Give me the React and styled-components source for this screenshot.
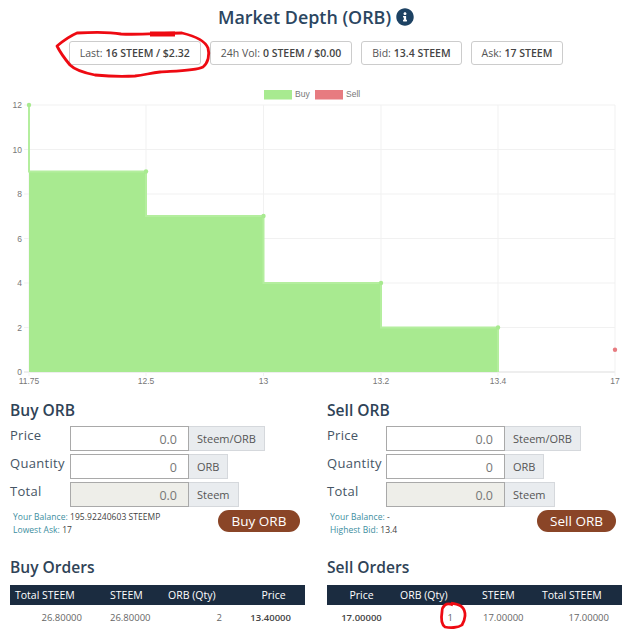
import React from 'react'
import styled, { createGlobalStyle } from 'styled-components'
import { FaInfoCircle } from 'react-icons/fa'

const GlobalStyle = createGlobalStyle`
    html, body {
        margin: 0;
        padding: 0;
        background: #fff;
        font-family: "Open Sans", "Liberation Sans", sans-serif;
    }
`

const Page = styled.div`
    position: relative;
    width: 635px;
    height: 632px;
    overflow: hidden;
`

const Title = styled.h1`
    display: flex;
    justify-content: center;
    align-items: center;
    gap: 5px;
    height: 34px;
    margin: 0;
    padding-right: 3px;
    font-size: 17.9px;
    font-weight: 600;
    color: #2b4661;
    svg {
        color: #1d4263;
    }
`

const Stats = styled.div`
    display: flex;
    justify-content: center;
    gap: 9px;
    margin-top: 7px;
    padding-right: 3px;
`

const Stat = styled.div`
    display: flex;
    align-items: center;
    gap: 3px;
    height: 24px;
    padding: 0 10px;
    box-sizing: border-box;
    border: 1px solid #ccc;
    border-radius: 3px;
    font-size: 10.5px;
    color: #555;
    b {
        font-weight: 600;
        color: #444;
    }
`

const Chart = styled.svg`
    display: block;
    margin-top: 19px;
    text {
        font-family: "Liberation Sans", Arial, sans-serif;
        font-size: 8.5px;
        fill: #777;
    }
`

const Columns = styled.div`
    display: grid;
    grid-template-columns: 317px 1fr;
    padding-left: 10px;
`

const Heading = styled.h2`
    margin: ${p => p.$top || 0}px 0 ${p => p.$bottom || 0}px;
    height: 22px;
    line-height: 20px;
    font-size: 15.6px;
    font-weight: 600;
    color: #2f4357;
`

const Field = styled.div`
    display: flex;
    height: 25px;
    margin-bottom: 3px;
`

const FieldLabel = styled.div`
    width: ${p => p.$width}px;
    font-size: 13px;
    line-height: 18px;
    letter-spacing: 0.3px;
    color: #455464;
`

const Value = styled.div`
    width: 119px;
    box-sizing: border-box;
    padding-right: 11px;
    border: 1px solid #a9a9a9;
    text-align: right;
    font-size: 12.5px;
    line-height: 25px;
    color: #777;
    background: ${p => (p.$disabled ? '#eeeee9' : '#fff')};
`

const Addon = styled.div`
    box-sizing: border-box;
    padding: 0 8px;
    border: 1px solid #d5d8dc;
    border-left: 0;
    font-size: 11px;
    line-height: 23px;
    color: #555;
    background: #e9ecef;
`

const FormFoot = styled.div`
    display: flex;
    justify-content: space-between;
    width: ${p => p.$width}px;
    margin-top: 2px;
    padding-left: 3px;
    box-sizing: border-box;
`

const Balance = styled.div`
    padding-top: 1px;
    font-size: 8.5px;
    line-height: 12.5px;
    letter-spacing: 0.05px;
    color: #3d8ea0;
    span {
        color: #3f3f3f;
    }
`

const TradeButton = styled.button`
    width: ${p => p.$width}px;
    height: 22px;
    padding: 0;
    border: 0;
    border-radius: 11px;
    background: #8a4527;
    color: #fff;
    font-family: inherit;
    font-size: 13.5px;
    line-height: 20px;
`

const Orders = styled.div`
    width: 295px;
`

const Row = styled.div`
    display: grid;
    grid-template-columns: ${p => p.$cols};
    align-items: center;
`

const HeadRow = styled(Row)`
    height: 20px;
    padding-bottom: 1px;
    box-sizing: border-box;
    background: #1b2c40;
    color: #fff;
    font-size: 10.5px;
`

const BodyRow = styled(Row)`
    height: 27px;
    padding-bottom: 2px;
    border-bottom: 2px solid #eee;
    box-sizing: content-box;
    height: 25px;
    color: #666;
    font-size: 9.5px;
`

const Cell = styled.div`
    padding: 0 ${p => p.$right || 0}px 0 ${p => p.$left || 0}px;
    text-align: ${p => p.$align || 'left'};
    white-space: nowrap;
    font-weight: ${p => (p.$strong ? 600 : 400)};
    color: ${p => (p.$strong ? '#444' : 'inherit')};
`

const Scribbles = styled.svg`
    position: absolute;
    left: 0;
    top: 0;
    pointer-events: none;
`

const buyCols = '100px 58px 54px 83px'
const sellCols = '69px 61px 80px 85px'

const ticksY = [0, 2, 4, 6, 8, 10, 12]
const ticksX = [
    [29, '11.75'],
    [146, '12.5'],
    [263.5, '13'],
    [381, '13.2'],
    [498, '13.4'],
    [615, '17'],
]
const yFor = v => 372 - v * 22.25

const buyLine = 'M29 105 V171.5 H146 V216 H263.5 V283 H381 V327.5 H498 V372'
const buyDots = [[29, 105], [146, 171.5], [263.5, 216], [381, 283], [498, 327.5]]

const DepthChart = () => (
    <Chart width="635" height="316" viewBox="0 84 635 316">
        <rect x="264" y="90" width="28" height="9.5" fill="#a8ea90" />
        <text x="295" y="97">Buy</text>
        <rect x="315" y="90" width="28" height="9.5" fill="#e77b80" />
        <text x="346" y="97">Sell</text>

        {ticksY.map(v => (
            <g key={v}>
                <line x1="24" x2="615" y1={yFor(v)} y2={yFor(v)} stroke={v === 0 ? '#ddd' : '#f1f1f1'} />
                <text x="22" y={yFor(v) + 3} textAnchor="end">{v}</text>
            </g>
        ))}
        {ticksX.map(([x, label]) => (
            <g key={label}>
                <line x1={x} x2={x} y1="105" y2="376" stroke="#f1f1f1" />
                <text x={x} y="384" textAnchor="middle">{label}</text>
            </g>
        ))}

        <path d={`${buyLine} H29 Z`} fill="#a8ea90" />
        <path d={buyLine} fill="none" stroke="#b4ee9e" strokeWidth="2" />
        {buyDots.map(([x, y]) => (
            <circle key={x} cx={x} cy={y} r="2.2" fill="#a8ea90" />
        ))}
        <circle cx="615" cy="349.7" r="2.2" fill="#e77b80" />
    </Chart>
)

const TradeForm = ({ coin, labelWidth, footWidth, buttonWidth, action, balance, extraLabel, extraValue }) => (
    <div>
        <Heading $bottom={4}>{action} {coin}</Heading>
        <Field>
            <FieldLabel $width={labelWidth}>Price</FieldLabel>
            <Value>0.0</Value>
            <Addon>Steem/ORB</Addon>
        </Field>
        <Field>
            <FieldLabel $width={labelWidth}>Quantity</FieldLabel>
            <Value>0</Value>
            <Addon>ORB</Addon>
        </Field>
        <Field>
            <FieldLabel $width={labelWidth}>Total</FieldLabel>
            <Value $disabled>0.0</Value>
            <Addon>Steem</Addon>
        </Field>
        <FormFoot $width={footWidth}>
            <Balance>
                Your Balance: <span>{balance}</span>
                <br />
                {extraLabel}: <span>{extraValue}</span>
            </Balance>
            <TradeButton $width={buttonWidth}>{action} {coin}</TradeButton>
        </FormFoot>
    </div>
)

const App = () => (
    <Page>
        <GlobalStyle />
        <Title>
            Market Depth (ORB) <FaInfoCircle size={18} />
        </Title>
        <Stats>
            <Stat>Last: <b>16 STEEM / $2.32</b></Stat>
            <Stat>24h Vol: <b>0 STEEM / $0.00</b></Stat>
            <Stat>Bid: <b>13.4 STEEM</b></Stat>
            <Stat>Ask: <b>17 STEEM</b></Stat>
        </Stats>

        <DepthChart />

        <Columns>
            <TradeForm
                action="Buy"
                coin="ORB"
                labelWidth={60}
                footWidth={290}
                buttonWidth={82}
                balance="195.92240603 STEEMP"
                extraLabel="Lowest Ask"
                extraValue="17"
            />
            <TradeForm
                action="Sell"
                coin="ORB"
                labelWidth={59}
                footWidth={289}
                buttonWidth={79}
                balance="-"
                extraLabel="Highest Bid"
                extraValue="13.4"
            />
        </Columns>

        <Columns>
            <Orders>
                <Heading $top={21} $bottom={6}>Buy Orders</Heading>
                <HeadRow $cols={buyCols}>
                    <Cell $left={5}>Total STEEM</Cell>
                    <Cell>STEEM</Cell>
                    <Cell>ORB (Qty)</Cell>
                    <Cell $align="center" $left={30} $right={10}>Price</Cell>
                </HeadRow>
                <BodyRow $cols={buyCols}>
                    <Cell $align="right" $right={28}>26.80000</Cell>
                    <Cell>26.80000</Cell>
                    <Cell $align="right">2</Cell>
                    <Cell $align="right" $right={14} $strong>13.40000</Cell>
                </BodyRow>
            </Orders>
            <Orders>
                <Heading $top={21} $bottom={6}>Sell Orders</Heading>
                <HeadRow $cols={sellCols}>
                    <Cell $align="center">Price</Cell>
                    <Cell $left={4}>ORB (Qty)</Cell>
                    <Cell $left={25}>STEEM</Cell>
                    <Cell $left={5}>Total STEEM</Cell>
                </HeadRow>
                <BodyRow $cols={sellCols}>
                    <Cell $align="center" $strong>17.00000</Cell>
                    <Cell $align="right" $right={4}>1</Cell>
                    <Cell $left={26}>17.00000</Cell>
                    <Cell $align="right" $right={13}>17.00000</Cell>
                </BodyRow>
            </Orders>
        </Columns>

        <Scribbles width="635" height="632" viewBox="0 0 635 632" fill="none" stroke="#ee0a12" strokeWidth="2.8" strokeLinejoin="round">
            <path d="M57 46 C63 41 70 36 77 33 C95 32 110 32 121 34 C140 35 160 33 182 33 C195 36 205 41 208 48 C210 55 208 63 203 67 C195 71 175 71 160 72 C150 73 145 75 135 76 C120 77 105 76 95 75 C85 73 75 70 70 65 C65 59 60 52 57 46 Z" />
            <path d="M150 34 H175" strokeWidth="5" />
            <path d="M453 605 C446 602 442 606 442 612 C441 618 441 624 445 627 C450 628 458 628 462 625 C465 620 467 612 462 607 C459 604 455 604 451 603" />
        </Scribbles>
    </Page>
)

export default App
